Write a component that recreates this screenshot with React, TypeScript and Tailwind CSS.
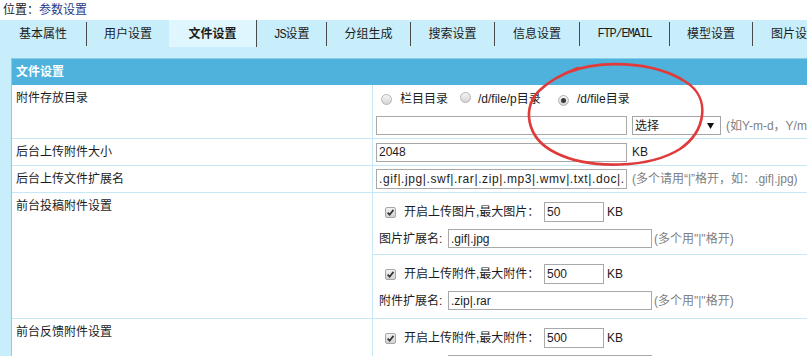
import React from 'react'

type Tab = { label: string; w: string; sep: boolean; active?: boolean; mono?: boolean }

const tabs: Tab[] = [
  { label: '基本属性', w: 'w-[87px]', sep: true },
  { label: '用户设置', w: 'w-[82px]', sep: false },
  { label: '文件设置', w: 'w-[88px]', sep: true, active: true },
  { label: 'JS设置', w: 'w-[70px]', sep: true },
  { label: '分组生成', w: 'w-[84px]', sep: true },
  { label: '搜索设置', w: 'w-[84px]', sep: true },
  { label: '信息设置', w: 'w-[85px]', sep: true },
  { label: 'FTP/EMAIL', w: 'w-[90px]', sep: true, mono: true },
  { label: '模型设置', w: 'w-[83px]', sep: true },
  { label: '图片设置', w: 'w-[85px]', sep: true },
]

function TabLabel({ tab }: { tab: Tab }) {
  if (tab.mono) {
    return <span className="font-['Liberation_Mono',monospace] text-[12px] tracking-[-1.2px]">{tab.label}</span>
  }
  if (tab.label.startsWith('JS')) {
    return (
      <span>
        <span className="font-['Liberation_Mono',monospace] text-[12px] tracking-[-1.2px]">JS</span>设置
      </span>
    )
  }
  return <span>{tab.label}</span>
}

function Radio({ checked }: { checked?: boolean }) {
  return (
    <span className="inline-flex w-[11px] h-[11px] shrink-0 items-center justify-center rounded-full border border-[#b3b3b3] bg-linear-to-b from-[#f5f5f5] to-[#d5d5d5]">
      {checked && <span className="w-[5px] h-[5px] rounded-full bg-[#3b3b3b]" />}
    </span>
  )
}

function Check() {
  return (
    <span className="inline-flex w-[11px] h-[11px] shrink-0 items-center justify-center rounded-[2px] border border-[#a6a6a6] bg-linear-to-b from-[#f2f2f2] to-[#d3d3d3]">
      <svg width="9" height="9" viewBox="0 0 9 9">
        <path d="M1.6 4.6 L3.6 6.7 L7.5 1.9" fill="none" stroke="#383838" strokeWidth="1.8" />
      </svg>
    </span>
  )
}

function Row({ label, h, children }: { label: string; h: string; children: React.ReactNode }) {
  return (
    <div className="flex border-b border-[#c4e8f6]">
      <div className="w-[361px] shrink-0 border-r border-[#c4e8f6] pl-[4px] pt-[5px]">{label}</div>
      <div className={`flex-1 ${h}`}>{children}</div>
    </div>
  )
}

function UploadBlock({ title, size, extLabel, ext, line }: { title: string; size: string; extLabel: string; ext: string; line?: boolean }) {
  return (
    <div className={line ? 'h-[62px] pt-[9px] border-b border-[#c4e8f6]' : 'h-[62px] pt-[9px]'}>
      <div className="flex items-center h-[20px] pl-[12px]">
        <Check />
        <span className="ml-[8px] w-[140px]">{title}</span>
        <input readOnly value={size} className="w-[60px] h-[20px] border border-[#a9a9a9] px-[2px] outline-none" />
        <span className="ml-[3px]">KB</span>
      </div>
      <div className="flex items-center h-[19px] mt-[7px] pl-[6px]">
        <span className="w-[69px]">{extLabel}</span>
        <input readOnly value={ext} className="w-[204px] h-[19px] border border-[#a9a9a9] px-[2px] outline-none" />
        <span className="ml-[2px] text-[#808080]">(多个用"|"格开)</span>
      </div>
    </div>
  )
}

export default function App() {
  return (
    <div className="relative w-[807px] h-[356px] overflow-hidden bg-white text-[12px] leading-[16px] text-[#1c1c1c] font-['Liberation_Sans','Noto_Sans_CJK_SC',sans-serif]">
      <div className="h-[20px] pl-[3px] pt-[2px] whitespace-nowrap">
        位置：<span className="text-[#1f3d8c]">参数设置</span>
      </div>

      <div className="flex items-start h-[27px] bg-[#c8edfb] whitespace-nowrap">
        {tabs.map((t) =>
          t.active ? (
            <div key={t.label} className={`${t.w} shrink-0 h-[27px] flex items-center justify-center bg-[#e0f6fe] border-r border-[#4a4a4a] font-bold`}>
              <TabLabel tab={t} />
            </div>
          ) : (
            <div
              key={t.label}
              className={`${t.w} shrink-0 mt-[2px] h-[24px] flex items-center justify-center ${t.sep ? 'border-r border-[#4a4a4a]' : ''}`}
            >
              <TabLabel tab={t} />
            </div>
          )
        )}
      </div>

      <div className="bg-[#c8edfb] pl-[11px] pt-[11px] h-[309px]">
        <div className="w-[900px] h-full border-l border-t border-[#86cdea] bg-white whitespace-nowrap">
          <div className="h-[26px] bg-[#4eb2dc] pl-[4px] flex items-center font-bold text-white">文件设置</div>

          <Row label="附件存放目录" h="h-[53px]">
            <div className="flex items-center h-[16px] mt-[6px] pl-[8px]">
              <Radio />
              <span className="ml-[8px]">栏目目录</span>
              <span className="ml-[12px]"><Radio /></span>
              <span className="ml-[7px] w-[69px]">/d/file/p目录</span>
              <span className="ml-[11px]"><Radio checked /></span>
              <span className="ml-[8px]">/d/file目录</span>
            </div>
            <div className="flex items-center mt-[9px] pl-[3px]">
              <input readOnly value="" className="w-[251px] h-[19px] border border-[#a9a9a9] px-[2px] outline-none" />
              <div className="ml-[5px] w-[89px] h-[19px] border border-[#a5a5a5] bg-white flex items-center justify-between pl-[2px] pr-[6px]">
                <span>选择</span>
                <svg width="7" height="6" viewBox="0 0 7 6">
                  <path d="M0 0 H7 L3.5 6 Z" fill="#111" />
                </svg>
              </div>
              <span className="ml-[5px] text-[#808080]">(如Y-m-d，Y/m-d等形式)</span>
            </div>
          </Row>

          <Row label="后台上传附件大小" h="h-[26px]">
            <div className="flex items-center h-full pl-[3px]">
              <input readOnly value="2048" className="w-[251px] h-[19px] border border-[#a9a9a9] px-[2px] outline-none" />
              <span className="ml-[5px]">KB</span>
            </div>
          </Row>

          <Row label="后台上传文件扩展名" h="h-[26px]">
            <div className="flex items-center h-full pl-[3px]">
              <input
                readOnly
                value=".gif|.jpg|.swf|.rar|.zip|.mp3|.wmv|.txt|.doc|.xls|.ppt|.pdf"
                className="w-[251px] h-[20px] border border-[#a9a9a9] px-[2px] tracking-[0.6px] outline-none"
              />
              <span className="ml-[5px] text-[#808080]">(多个请用“|”格开，如：.gif|.jpg)</span>
            </div>
          </Row>

          <Row label="前台投稿附件设置" h="h-[125px]">
            <UploadBlock line title="开启上传图片,最大图片：" size="50" extLabel="图片扩展名:" ext=".gif|.jpg" />
            <UploadBlock title="开启上传附件,最大附件：" size="500" extLabel="附件扩展名:" ext=".zip|.rar" />
          </Row>

          <Row label="前台反馈附件设置" h="h-[62px]">
            <UploadBlock title="开启上传附件,最大附件：" size="500" extLabel="附件扩展名:" ext=".zip|.rar" />
          </Row>
        </div>
      </div>

      <svg className="absolute inset-0 pointer-events-none" width="807" height="356" viewBox="0 0 807 356">
        <path
          d="M 566 73 C 598 60, 652 60, 686 82 C 711 98, 706 131, 680 149 C 650 168, 590 170, 556 153 C 525 138, 522 106, 540 90 C 548 82, 560 75, 578 68"
          fill="none"
          stroke="#e03a3a"
          strokeWidth="2.6"
          strokeLinecap="round"
        />
      </svg>
    </div>
  )
}
